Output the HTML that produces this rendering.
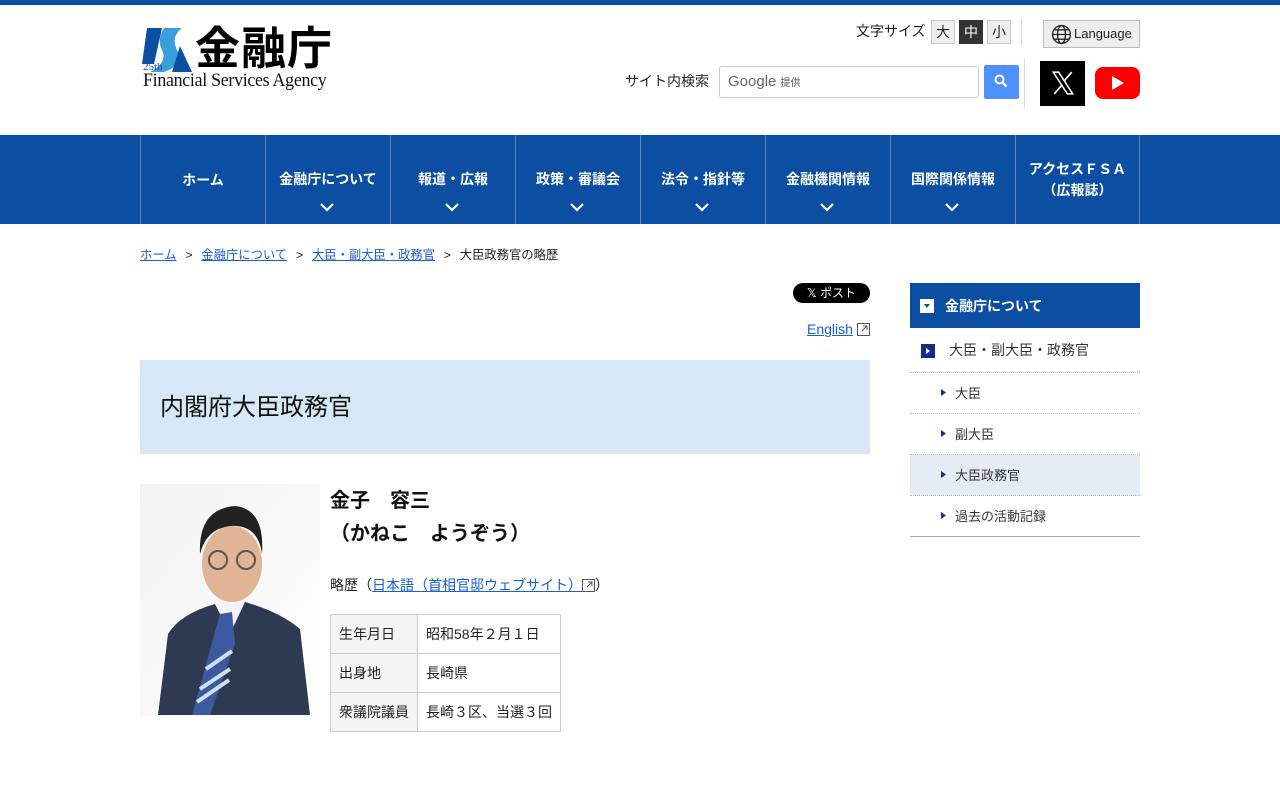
<!DOCTYPE html>
<html lang="ja"><head><meta charset="utf-8">
<style>
*{box-sizing:border-box;margin:0;padding:0}
body{width:1280px;height:800px;overflow:hidden;background:#fff;font-family:"Liberation Sans","Noto Sans CJK JP",sans-serif;color:#222;position:relative}
.abs{position:absolute}
a{color:#1a5fd6}
.topbar{left:0;top:0;width:1280px;height:5px;background:#0b4ea2}
.nav{left:0;top:135px;width:1280px;height:89px;background:#0b4ea2}
.nav div{position:absolute;top:0;width:125px;height:89px;border-left:1px solid #5a85c2;color:#fff;font-weight:bold;font-size:14px;text-align:center}
.fs{font-size:14px;text-align:center;line-height:22px;width:24px;height:24px;border:1px solid #ccc;background:#eee}
.side{left:910px;width:230px;font-size:13px;color:#333}
td{border:1px solid #ccc;padding:0 8px;height:39px;font-size:14px}
</style></head><body>
<div class="abs topbar"></div>
<svg class="abs" style="left:142px;top:26px" width="50" height="46" viewBox="0 0 50 46">
<polygon points="5,2 20,2 12,38 0,38" fill="#0b4ea2"/>
<path d="M22,2 L40,2 C30,10 32,18 36,26 C40,34 34,42 22,46 L8,46 C20,40 24,32 20,24 C16,16 18,8 22,2Z" fill="#3aa0dc"/>
<polygon points="38,20 50,46 30,46" fill="#0b4ea2"/>
<text x="1" y="44" font-size="11" fill="#0b4ea2" font-family="Liberation Serif">25th</text>
</svg>
<div class="abs" style="left:195px;top:23px;font-size:45px;font-weight:bold;letter-spacing:1px;line-height:52px;color:#000">金融庁</div>
<div class="abs" style="left:143px;top:70px;font-family:'Liberation Serif',serif;font-size:19px;color:#111;letter-spacing:-0.3px;transform:scaleX(0.94);transform-origin:left">Financial Services Agency</div>
<div class="abs" style="left:856px;top:21px;font-size:14px">文字サイズ</div>
<div class="abs fs" style="left:931px;top:20px">大</div>
<div class="abs fs" style="left:959px;top:20px;background:#333;color:#fff;border-color:#333">中</div>
<div class="abs fs" style="left:987px;top:20px">小</div>
<div class="abs" style="left:1021px;top:20px;width:1px;height:24px;background:#ddd"></div>
<div class="abs" style="left:1043px;top:20px;width:97px;height:28px;border:1px solid #bbb;background:#eee;font-size:13px;line-height:26px;padding-left:30px">Language</div>
<svg class="abs" style="left:1051px;top:24px" width="21" height="21" viewBox="0 0 20 20" fill="none" stroke="#222" stroke-width="1.3"><circle cx="10" cy="10" r="8.5"/><ellipse cx="10" cy="10" rx="3.8" ry="8.5"/><path d="M1.5 10h17M3 5.5h14M3 14.5h14"/></svg>
<div class="abs" style="left:625px;top:71px;font-size:14px">サイト内検索</div>
<div class="abs" style="left:719px;top:66px;width:260px;height:32px;border:1px solid #ccc;border-radius:3px;padding-left:8px;line-height:30px;font-size:15px;color:#666">Google <span style="font-size:10px;color:#555">提供</span></div>
<div class="abs" style="left:984px;top:65px;width:35px;height:34px;background:#4d90fe;border-radius:2px"></div>
<svg class="abs" style="left:993px;top:73px" width="16" height="16" viewBox="0 0 16 16"><circle cx="6.5" cy="6.5" r="4" fill="none" stroke="#fff" stroke-width="2"/><path d="M9.5 9.5l4 4" stroke="#fff" stroke-width="2.4"/></svg>
<div class="abs" style="left:1024px;top:58px;width:1px;height:50px;background:#ddd"></div>
<div class="abs" style="left:1040px;top:61px;width:45px;height:45px;background:#000"></div>
<svg class="abs" style="left:1050px;top:70px" width="26" height="26" viewBox="0 0 24 24"><path d="M3 2h5l13 20h-5z" fill="none" stroke="#fff" stroke-width="1.4"/><path d="M20 2L13.5 9.5M4 22l6.5-7.5" stroke="#fff" stroke-width="1.6"/></svg>
<div class="abs" style="left:1095px;top:67px;width:45px;height:32px;background:#f00;border-radius:8px"></div>
<svg class="abs" style="left:1110px;top:75px" width="16" height="16"><polygon points="2,1 14,8 2,15" fill="#fff"/></svg>
<div class="abs nav">
<div style="left:140px;line-height:91px">ホーム</div>
<div style="left:265px;padding-top:34px">金融庁について</div>
<div style="left:390px;padding-top:34px">報道・広報</div>
<div style="left:515px;padding-top:34px">政策・審議会</div>
<div style="left:640px;padding-top:34px">法令・指針等</div>
<div style="left:765px;padding-top:34px">金融機関情報</div>
<div style="left:890px;padding-top:34px">国際関係情報</div>
<div style="left:1015px;padding-top:24px;border-right:1px solid #5a85c2;line-height:21px">アクセスＦＳＡ<br>（広報誌）</div>
</div>
<svg class="abs" style="left:0;top:200px" width="1280" height="16"><g fill="none" stroke="#fff" stroke-width="2.2"><path d="M321 4l6 6 6-6M446 4l6 6 6-6M571 4l6 6 6-6M696 4l6 6 6-6M821 4l6 6 6-6M946 4l6 6 6-6"/></g></svg>
<div class="abs" style="left:140px;top:245px;font-size:12.3px;color:#222;word-spacing:1px"><a href="#">ホーム</a>&nbsp;&nbsp;&gt;&nbsp;&nbsp;<a href="#">金融庁について</a>&nbsp;&nbsp;&gt;&nbsp;&nbsp;<a href="#">大臣・副大臣・政務官</a>&nbsp;&nbsp;&gt;&nbsp;&nbsp;大臣政務官の略歴</div>
<div class="abs" style="left:793px;top:283px;width:77px;height:20px;background:#000;border-radius:10px;color:#fff;font-size:12px;line-height:20px;text-align:center">𝕏 ポスト</div>
<div class="abs" style="left:807px;top:321px;font-size:14px"><a href="#">English</a></div>
<svg class="abs" style="left:857px;top:323px" width="13" height="13"><rect x="0.5" y="0.5" width="12" height="12" fill="none" stroke="#555"/><path d="M5 8l5-5M6 3h4v4" stroke="#555" fill="none"/></svg>
<div class="abs" style="left:140px;top:360px;width:730px;height:94px;background:#d6e8f6;font-size:24px;line-height:96px;padding-left:20px;color:#111">内閣府大臣政務官</div>
<svg class="abs" style="left:140px;top:484px" width="180" height="232" viewBox="0 0 180 232">
<defs><linearGradient id="g" x1="0" y1="0" x2="1" y2="1"><stop offset="0" stop-color="#f2f2f2"/><stop offset="1" stop-color="#fff"/></linearGradient></defs>
<rect width="180" height="232" fill="url(#g)"/>
<path d="M18 231 L28 150 Q40 130 75 120 L90 118 L105 118 Q140 128 160 145 L170 231Z" fill="#2e3a52"/>
<path d="M75 120 L90 150 L105 118 L95 110 L82 110Z" fill="#f4f4f4"/>
<path d="M80 130 L92 128 L95 160 L70 231 L52 231Z" fill="#3c5aa0"/>
<path d="M60 205l30-20M57 218l32-22M66 185l26-18" stroke="#cfe0f0" stroke-width="4"/>
<ellipse cx="92" cy="80" rx="30" ry="38" fill="#e0b494"/>
<path d="M60 70 Q58 25 95 22 Q125 25 122 70 Q118 40 90 42 Q66 45 60 70Z" fill="#222"/>
<circle cx="78" cy="76" r="9" fill="none" stroke="#555" stroke-width="2"/><circle cx="106" cy="76" r="9" fill="none" stroke="#555" stroke-width="2"/>
</svg>
<div class="abs" style="left:330px;top:485px;font-size:20px;font-weight:bold;line-height:33px;color:#111">金子　容三<br>（かねこ　ようぞう）</div>
<div class="abs" style="left:330px;top:575px;font-size:14px">略歴（<a href="#">日本語（首相官邸ウェブサイト）</a><svg width="13" height="13" style="vertical-align:-2px"><rect x="0.5" y="0.5" width="12" height="12" fill="none" stroke="#555"/><path d="M5 8l5-5M6 3h4v4" stroke="#555" fill="none"/></svg>）</div>
<table class="abs" style="left:330px;top:614px;border-collapse:collapse">
<tr><td style="background:#f4f4f4">生年月日</td><td>昭和58年２月１日</td></tr>
<tr><td style="background:#f4f4f4">出身地</td><td>長崎県</td></tr>
<tr><td style="background:#f4f4f4">衆議院議員</td><td>長崎３区、当選３回</td></tr>
</table>
<div class="abs side" style="top:283px;height:45px;background:#0b4ea2;color:#fff;font-weight:bold;font-size:14px;line-height:47px;padding-left:35px">金融庁について</div>
<div class="abs" style="left:920px;top:299px;width:14px;height:14px;background:#fff"></div>
<svg class="abs" style="left:924px;top:304px" width="6" height="4"><polygon points="0,0 6,0 3,4" fill="#0b4ea2"/></svg>
<div class="abs" style="left:921px;top:344px;width:14px;height:14px;background:#1a2a8c"></div>
<svg class="abs" style="left:926px;top:348px" width="4" height="6"><polygon points="0,0 4,3 0,6" fill="#fff"/></svg>
<div class="abs side" style="top:328px;height:45px;line-height:45px;padding-left:39px;font-size:14px;border-bottom:1px dotted #bbb">大臣・副大臣・政務官</div>
<div class="abs side" style="top:373px;height:41px;line-height:41px;padding-left:45px;border-bottom:1px dotted #bbb">大臣</div>
<div class="abs side" style="top:414px;height:41px;line-height:41px;padding-left:45px;border-bottom:1px dotted #bbb">副大臣</div>
<div class="abs side" style="top:455px;height:41px;line-height:41px;padding-left:45px;border-bottom:1px dotted #bbb;background:#e5ecf6">大臣政務官</div>
<div class="abs side" style="top:496px;height:41px;line-height:41px;padding-left:45px;border-bottom:1px solid #aaa">過去の活動記録</div>
<svg class="abs" style="left:941px;top:389px" width="6" height="140"><g fill="#1a2a8c"><polygon points="0,0 5,3.5 0,7"/><polygon points="0,41 5,44.5 0,48"/><polygon points="0,82 5,85.5 0,89"/><polygon points="0,123 5,126.5 0,130"/></g></svg>
</body></html>
